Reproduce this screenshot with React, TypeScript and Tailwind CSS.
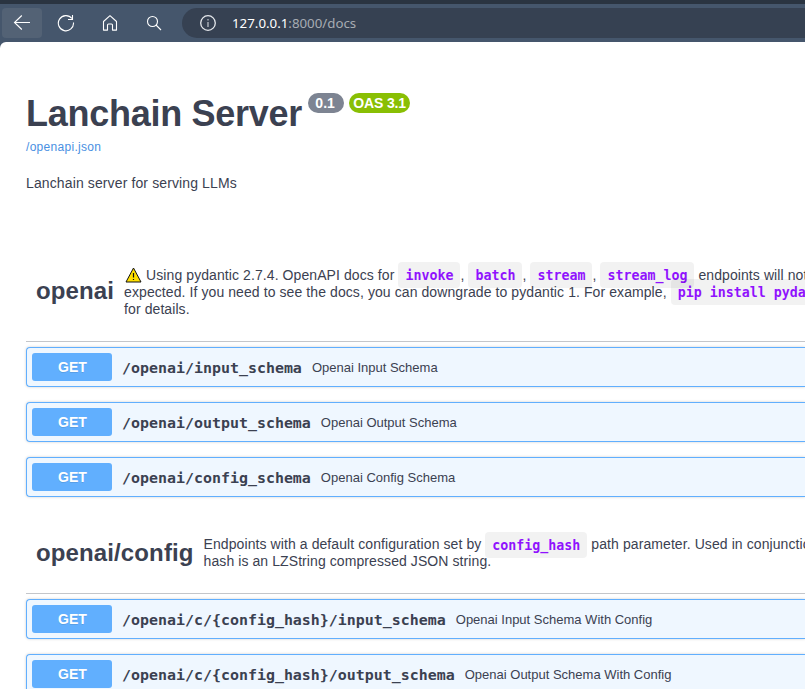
import type { ReactNode } from "react";

function Code({ children }: { children: string }) {
  return (
    <code className="rounded bg-black/5 px-[7px] py-[5.5px] font-['DejaVu_Sans_Mono',monospace] text-[13.3px] font-bold tracking-normal text-[#9012fe]">
      {children}
    </code>
  );
}

function Operation({ path, summary }: { path: string; summary: string }) {
  return (
    <div className="mb-[15px] flex h-10 shrink-0 items-center rounded-l-[4px] border border-r-0 border-[#61affe] bg-[#eff7ff] px-[5px] shadow-[0_0_3px_rgba(0,0,0,0.19)]">
      <span className="h-7 w-20 rounded-[3px] bg-[#61affe] pl-px text-center text-[14px] leading-7 font-bold text-white [text-shadow:0_1px_0_rgba(0,0,0,0.1)]">
        GET
      </span>
      <span className="pt-[3px] pl-[10px] font-['DejaVu_Sans_Mono',monospace] text-[14.95px] font-bold">{path}</span>
      <span className="pt-px pl-[10px] text-[13px]">{summary}</span>
    </div>
  );
}

function TagHeader({ name, className, children }: { name: string; className: string; children: ReactNode }) {
  return (
    <div className={`mb-[5px] flex items-center border-b border-[#3b4151]/30 pl-[10px] ${className}`}>
      <h3 className="text-[24px] leading-7 font-bold tracking-[0.12px]">{name}</h3>
      <div className="pl-[10px] text-[14px] leading-[17px] tracking-[0.085px]">{children}</div>
    </div>
  );
}

function Toolbar() {
  return (
    <header className="flex h-[42px] items-center border-t-4 border-[#2a3441] bg-[#45566c] pl-[2px] text-white">
      <span className="flex h-[30px] w-10 items-center justify-center rounded bg-[#536275]">
        <svg width="18" height="18" viewBox="0 0 18 18" fill="none" stroke="currentColor" strokeWidth="1.1">
          <path d="M17 8.5H1.5M8.8 1.5 1.5 8.5l7.3 7" />
        </svg>
      </span>
      <svg className="ml-[15px]" width="18" height="18" viewBox="0 0 18 18" fill="none" stroke="currentColor" strokeWidth="1.1">
        <path d="M16.5 8.5A7.6 7.6 0 1 1 14.9 4.5M15.5 1v4.5H11" />
      </svg>
      <svg className="ml-[26px]" width="18" height="18" viewBox="0 0 18 18" fill="none" stroke="currentColor" strokeWidth="1.1" strokeLinejoin="round">
        <path d="M2.5 7.5 9 1.7l6.5 5.8v8.6h-4V11q0-1-1-1h-3q-1 0-1 1v5.1h-4z" />
      </svg>
      <svg className="ml-[26px]" width="18" height="18" viewBox="0 0 18 18" fill="none" stroke="currentColor" strokeWidth="1.1">
        <circle cx="7.5" cy="7.5" r="5" />
        <path d="m11 11 5 5" />
      </svg>
      <div className="ml-[19px] flex h-[30px] flex-1 items-center rounded-l-full bg-[#364152] pl-[17px]">
        <svg width="18" height="18" viewBox="0 0 18 18" fill="none" stroke="#e5e8ec" strokeWidth="1.3">
          <circle cx="9" cy="9" r="7.3" />
          <path d="M9 8v5M9 5v1.5" stroke="#b9bec5" />
        </svg>
        <span className="ml-[15px] pt-px font-['Noto_Sans',sans-serif] text-[13.3px] text-white">
          127.0.0.1<span className="text-[#a7acb2]">:8000/docs</span>
        </span>
      </div>
    </header>
  );
}

export default function App() {
  return (
    <div className="flex h-[689px] w-[805px] flex-col overflow-hidden bg-[#45566c] font-['Liberation_Sans',Arial,sans-serif] whitespace-nowrap text-[#3b4151]">
      <Toolbar />
      <main className="flex flex-1 flex-col overflow-hidden rounded-tl-[6px] bg-white pl-[26px]">
        <div className="mt-[50px] flex h-[42px] shrink-0 items-start">
          <h1 className="pt-px text-[36px] leading-[42px] font-bold tracking-[-0.27px]">Lanchain Server</h1>
          <span className="mt-[1px] ml-[6px] h-5 w-9 rounded-full bg-[#7d8492] pr-[2px] text-center text-[14px] leading-5 font-bold text-white">0.1</span>
          <span className="mt-[1px] ml-[5px] h-5 w-[61px] rounded-full bg-[#89bf04] text-center text-[14px] leading-5 font-bold tracking-[-0.15px] text-white">OAS 3.1</span>
        </div>
        <a className="mt-[5px] h-4 shrink-0 text-[12px] leading-4 tracking-[0.3px] text-[#4990e2]">/openapi.json</a>
        <p className="mt-5 h-4 shrink-0 text-[14px] leading-4 tracking-[0.12px]">Lanchain server for serving LLMs</p>

        <section className="mt-[49px] flex shrink-0 flex-col">
          <TagHeader name="openai" className="h-[102px]">
            <div className="mt-[3px] flex items-baseline">
              <svg className="mr-[4px] mb-px ml-px self-center" width="17" height="16" viewBox="0 0 17 16">
                <path d="M8.5 1 16 15H1z" fill="#ffe000" stroke="#111" />
                <path d="M8.5 6v4.5M8.5 12v1" stroke="#111" strokeWidth="1.2" />
              </svg>
              <span className="whitespace-pre">
                Using pydantic 2.7.4. OpenAPI docs for <Code>invoke</Code>, <Code>batch</Code>, <Code>stream</Code>, <Code>stream_log</Code> endpoints will not
              </span>
            </div>
            <div>
              expected. If you need to see the docs, you can downgrade to pydantic 1. For example, <Code>pip install pydantic==1.10.17</Code>
            </div>
            <div>for details.</div>
          </TagHeader>
          <Operation path="/openai/input_schema" summary="Openai Input Schema" />
          <Operation path="/openai/output_schema" summary="Openai Output Schema" />
          <Operation path="/openai/config_schema" summary="Openai Config Schema" />
        </section>

        <section className="mt-[3px] flex shrink-0 flex-col">
          <TagHeader name="openai/config" className="h-[79px] pb-[2px]">
            <div>
              Endpoints with a default configuration set by <Code>config_hash</Code> path parameter. Used in conjunction
            </div>
            <div>hash is an LZString compressed JSON string.</div>
          </TagHeader>
          <Operation path="/openai/c/{config_hash}/input_schema" summary="Openai Input Schema With Config" />
          <Operation path="/openai/c/{config_hash}/output_schema" summary="Openai Output Schema With Config" />
        </section>
      </main>
    </div>
  );
}
